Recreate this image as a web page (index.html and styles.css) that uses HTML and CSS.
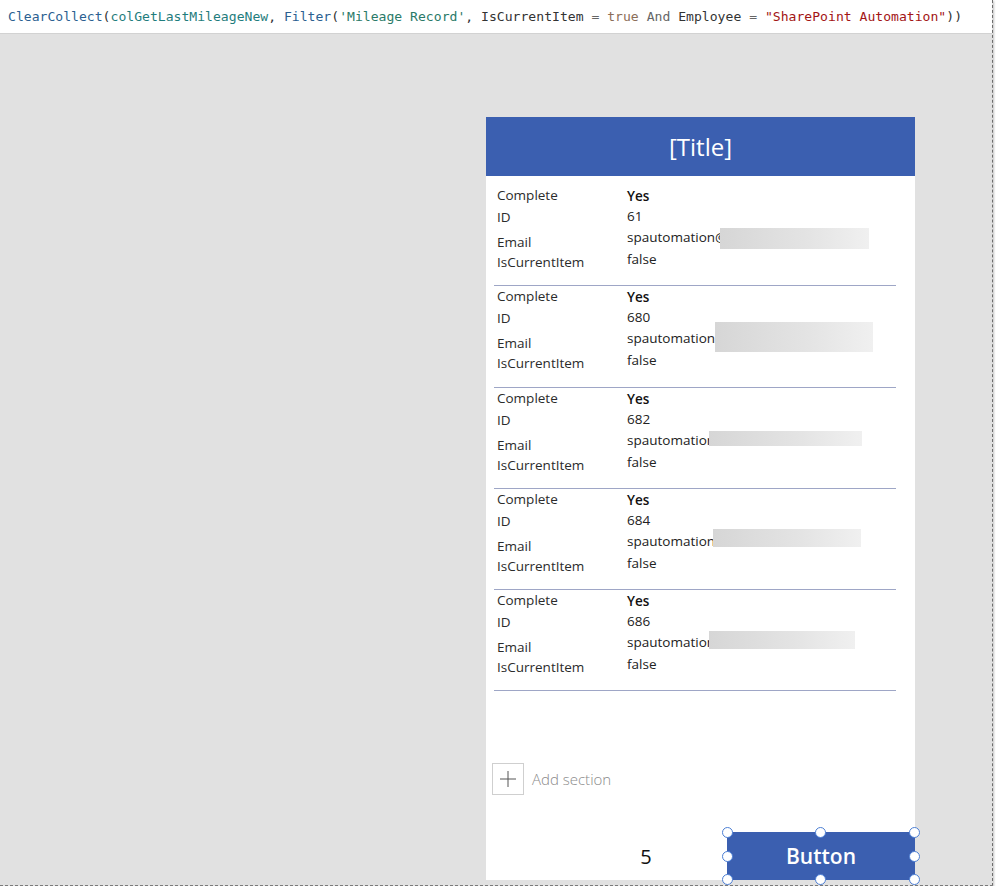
FILE: index.html
```html
<!DOCTYPE html>
<html lang="en">
<head>
    <meta charset="UTF-8">
    <title>Mileage Gallery</title>
    <link rel="stylesheet" href="styles.css">
</head>
<body>
    <div class="shot">
        <div class="formula-bar">
            <span class="fn">ClearCollect</span>(<span class="var">colGetLastMileageNew</span>, <span class="fn">Filter</span>(<span class="src">'Mileage Record'</span>, IsCurrentItem <span class="op">=</span> <span class="kw">true</span> <span class="op">And</span> Employee <span class="op">=</span> <span class="str">"SharePoint Automation"</span>))
        </div>
        <div class="stage">
            <div class="screen">
                <div class="screen-header">[Title]</div>
                <div class="gallery">
                    <div class="record">
                        <div class="labels">
                            <div>Complete</div><div>ID</div><div>Email</div><div>IsCurrentItem</div>
                        </div>
                        <div class="values">
                            <div class="yes">Yes</div><div>61</div><div>spautomation@</div><div>false</div>
                        </div>
                        <div class="redact redact-1"></div>
                    </div>
                    <div class="record">
                        <div class="labels">
                            <div>Complete</div><div>ID</div><div>Email</div><div>IsCurrentItem</div>
                        </div>
                        <div class="values">
                            <div class="yes">Yes</div><div>680</div><div>spautomation</div><div>false</div>
                        </div>
                        <div class="redact redact-2"></div>
                    </div>
                    <div class="record">
                        <div class="labels">
                            <div>Complete</div><div>ID</div><div>Email</div><div>IsCurrentItem</div>
                        </div>
                        <div class="values">
                            <div class="yes">Yes</div><div>682</div><div>spautomation</div><div>false</div>
                        </div>
                        <div class="redact redact-3"></div>
                    </div>
                    <div class="record">
                        <div class="labels">
                            <div>Complete</div><div>ID</div><div>Email</div><div>IsCurrentItem</div>
                        </div>
                        <div class="values">
                            <div class="yes">Yes</div><div>684</div><div>spautomation</div><div>false</div>
                        </div>
                        <div class="redact redact-4"></div>
                    </div>
                    <div class="record">
                        <div class="labels">
                            <div>Complete</div><div>ID</div><div>Email</div><div>IsCurrentItem</div>
                        </div>
                        <div class="values">
                            <div class="yes">Yes</div><div>686</div><div>spautomation</div><div>false</div>
                        </div>
                        <div class="redact redact-5"></div>
                    </div>
                </div>
                <div class="add-section">
                    <div class="add-box">
                        <svg width="18" height="18" viewBox="0 0 18 18"><path d="M9 1v16M1 9h16" stroke="#555" stroke-width="1" fill="none"/></svg>
                    </div>
                    <span>Add section</span>
                </div>
                <div class="footer-row">
                    <div class="count">5</div>
                    <div class="button">
                        Button
                        <span class="handle h-tl"></span>
                        <span class="handle h-tc"></span>
                        <span class="handle h-tr"></span>
                        <span class="handle h-ml"></span>
                        <span class="handle h-mr"></span>
                        <span class="handle h-bl"></span>
                        <span class="handle h-bc"></span>
                        <span class="handle h-br"></span>
                    </div>
                </div>
            </div>
        </div>
    </div>
</body>
</html>
```

FILE: styles.css
```css
body, html {
    margin: 0;
    padding: 0;
}

body {
    background-color: #fff;
    font-family: "Open Sans", sans-serif;
}

.shot {
    width: 992px;
    height: 885px;
    background-color: #e1e1e1;
    border-right: 1px dashed #6d6d6d;
    border-bottom: 1px dashed #7a7a7a;
    box-shadow: 1px 1px 2px rgba(0, 0, 0, 0.25);
    overflow: hidden;
}

/* formula bar */

.formula-bar {
    height: 33px;
    line-height: 34px;
    padding-left: 8px;
    background-color: #fff;
    border-bottom: 1px solid #d2d2d2;
    font-family: "DejaVu Sans Mono", monospace;
    font-size: 13.1px;
    color: #333;
    white-space: nowrap;
}

.formula-bar .fn {
    color: #2b5f91;
}

.formula-bar .var {
    color: #1f7d7d;
}

.formula-bar .src {
    color: #2a7a68;
}

.formula-bar .op {
    color: #666;
}

.formula-bar .kw {
    color: #8c6e58;
}

.formula-bar .str {
    color: #a31515;
}

/* canvas */

.stage {
    padding-top: 83px;
    padding-left: 486px;
}

.screen {
    width: 429px;
    height: 763px;
    background-color: #fff;
    display: flex;
    flex-direction: column;
}

.screen-header {
    flex-shrink: 0;
    height: 59px;
    background-color: #3b5fb0;
    color: #fff;
    font-size: 24px;
    display: flex;
    align-items: center;
    justify-content: center;
}

.gallery {
    padding: 9px 19px 0 8px;
}

.record {
    position: relative;
    height: 100.25px;
    border-bottom: 1px solid #9ea6c6;
    display: flex;
    padding-left: 3px;
    font-size: 13.5px;
}

.labels {
    width: 130px;
    color: #2b2b2b;
}

.values {
    color: #222;
}

.labels div,
.values div {
    height: 20px;
    line-height: 20px;
}

.labels div:nth-child(2) { margin-top: 2px; }
.labels div:nth-child(3) { margin-top: 5px; }

.values div:nth-child(1) { margin-top: 1px; }
.values div:nth-child(3) { margin-top: 1px; }
.values div:nth-child(4) { margin-top: 2px; }

.values .yes {
    font-weight: 600;
    color: #111;
}

/* blurred out email addresses */
.redact {
    position: absolute;
    background: linear-gradient(to right, #d6d6d6, #e4e4e4 60%, #f0f0f0);
}

.redact-1 { left: 226px; top: 43px; width: 149px; height: 21px; }
.redact-2 { left: 221px; top: 36px; width: 158px; height: 30px; }
.redact-3 { left: 215px; top: 43px; width: 153px; height: 15px; }
.redact-4 { left: 219px; top: 40px; width: 148px; height: 18px; }
.redact-5 { left: 215px; top: 41px; width: 146px; height: 18px; }

.add-section {
    display: flex;
    align-items: center;
    margin-top: 72px;
    margin-left: 6px;
    height: 32px;
}

.add-box {
    width: 30px;
    height: 30px;
    border: 1px solid #cfcfcf;
    display: flex;
    align-items: center;
    justify-content: center;
}

.add-section span {
    margin-left: 8px;
    font-size: 15px;
    font-weight: 300;
    color: #8a8a8a;
}

.footer-row {
    margin-top: 37px;
    height: 48px;
    display: flex;
    align-items: center;
    justify-content: flex-end;
}

.count {
    width: 40px;
    margin-right: 61px;
    text-align: center;
    font-size: 20px;
    color: #111;
}

.button {
    position: relative;
    width: 188px;
    height: 48px;
    background-color: #3b5fb0;
    color: #fff;
    font-size: 21px;
    font-weight: 600;
    display: flex;
    align-items: center;
    justify-content: center;
}

.handle {
    position: absolute;
    width: 9px;
    height: 9px;
    border: 1px solid #4d7fd4;
    border-radius: 50%;
    background-color: #fff;
}

.h-tl { left: -5px; top: -5px; }
.h-tc { left: 88px; top: -5px; }
.h-tr { right: -5px; top: -5px; }
.h-ml { left: -5px; top: 19px; }
.h-mr { right: -5px; top: 19px; }
.h-bl { left: -5px; bottom: -5px; }
.h-bc { left: 88px; bottom: -5px; }
.h-br { right: -5px; bottom: -5px; }
```
